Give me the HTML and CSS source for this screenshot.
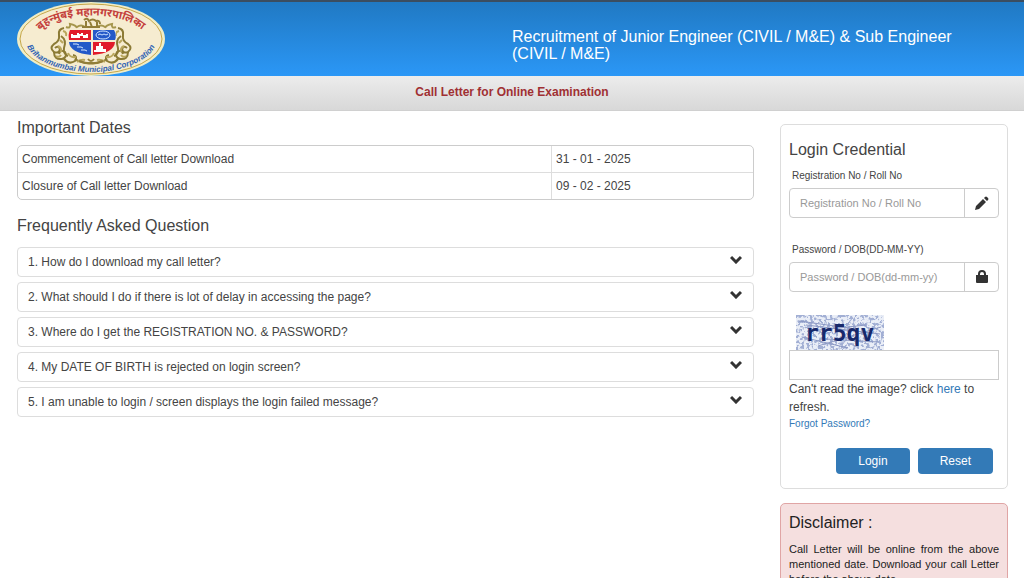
FILE: index.html
```html
<!DOCTYPE html>
<html lang="en">

<head>
    <meta charset="utf-8">
    <meta name="viewport" content="width=device-width, initial-scale=1">
    <title>Call Letter for Online Examination</title>
    <link rel="stylesheet" href="styles.css">
</head>

<body>

    <header class="header">
        <svg class="logo" viewBox="0 0 148 74" role="img" aria-label="Brihanmumbai Municipal Corporation">
            <defs>
                <path id="arc_top" d="M21 32 A54 23 0 0 1 127 32"/>
                <path id="arc_bottom" d="M9 38 A65 32 0 0 0 139 38"/>
                <g id="scroll" fill="none" stroke="#8b7a35" stroke-width="2">
                    <path d="M47 26 q-6 1 -5 7 q1 6 -5 9 q-5 4 0 8 q5 2 6 -3 q-2 -4 -5 -1"/>
                    <path d="M37 50 q0 8 8 7 q6 -2 3 -7 q-5 -3 -6 2 M47 57 q5 6 11 2 q3 -5 -2 -6"/>
                    <path d="M44 34 q6 4 3 12 q-1 6 4 8 M58 57 q8 5 16 4"/>
                    <path d="M49 25 q5 2 4 -3 q6 1 7 4 M60 25 q4 -3 8 0" stroke="#a5964c"/>
                    <path d="M46 29 q4 1 3 5 M43 38 l3 3 M41 44 q4 2 3 6 M51 51 q2 5 8 4 M60 60 q4 -3 8 -2 M39 54 q3 2 5 -1" stroke="#b9a65c"/>
                </g>
            </defs>
            <ellipse cx="74" cy="37" rx="74" ry="37" fill="#f0edc5"/>
            <ellipse cx="74" cy="37" rx="71" ry="35" fill="#f6ecd0" stroke="#c5a748" stroke-width="1"/>
            <text class="logo_hindi"><textPath href="#arc_top" startOffset="50%" text-anchor="middle">बृहन्मुंबई महानगरपालिका</textPath></text>
            <use href="#scroll"/>
            <use href="#scroll" transform="matrix(-1 0 0 1 148 0)"/>
            <g fill="none" stroke="#927e38" stroke-width="2">
                <path d="M67 18 q3 -3 5 1 q4 -3 7 0 q4 -1 4 3 M69 19 v6 M73 20 l2 5 M80 20 v5 M65 25 h18"/>
                <path d="M62 59 q12 5 24 0 M71 57 q3 4 6 0"/>
            </g>
            <path d="M51 27 H99 V43 Q97 51 75 54 Q53 51 51 43 Z" fill="#f6ecd0"/>
            <path d="M53 28 h21 v10 h-22 q-1 -6 1 -10" fill="#e11b2b"/>
            <path d="M76 28 h21 q3 5 1 10 h-22 Z" fill="#2459c8"/>
            <path d="M52 40 h22 v13 q-21 -2 -22 -13" fill="#2459c8"/>
            <path d="M76 40 h22 q-1 11 -22 13 Z" fill="#e11b2b"/>
            <path d="M54 36 v-4 h2 v1 h4 v-2 h2 v1 h2 v-1 h2 v2 h3 v-1 h2 v4 h-5 v-2 h-3 v2 Z" fill="#fff"/>
            <ellipse cx="86" cy="33" rx="7" ry="4" fill="none" stroke="#cce2ff"/>
            <path d="M81 33 l2 -1 2 1 2 -1 2 1 2 -1" fill="none" stroke="#cce2ff"/>
            <path d="M56 42 h4 l2 1 M60 45 h4 l2 1 M64 48 h4 l2 1" fill="none" stroke="#d6e8ff"/>
            <path d="M77 50 v-2 h2 v-4 h3 v-3 h2 v3 h2 v3 h3 v3 Z" fill="#fff"/>
            <text class="logo_english"><textPath href="#arc_bottom" startOffset="50%" text-anchor="middle">Brihanmumbai Municipal Corporation</textPath></text>
        </svg>
        <h1 class="header_title">Recruitment of Junior Engineer (CIVIL / M&amp;E) &amp; Sub Engineer (CIVIL / M&amp;E)</h1>
    </header>

    <div class="sub_header">Call Letter for Online Examination</div>

    <div class="content">
        <main>
            <h2 class="section_title">Important Dates</h2>
            <table class="dates">
                <tr>
                    <td class="date_name">Commencement of Call letter Download</td>
                    <td>31 - 01 - 2025</td>
                </tr>
                <tr>
                    <td class="date_name">Closure of Call letter Download</td>
                    <td>09 - 02 - 2025</td>
                </tr>
            </table>

            <h2 class="section_title">Frequently Asked Question</h2>
            <div class="faq">
                <button class="question" type="button">1. How do I download my call letter?
                    <svg class="chevron" viewBox="0 0 12 9"><path d="M1 2 L6 7 L11 2"/></svg></button>
                <button class="question" type="button">2. What should I do if there is lot of delay in accessing the page?
                    <svg class="chevron" viewBox="0 0 12 9"><path d="M1 2 L6 7 L11 2"/></svg></button>
                <button class="question" type="button">3. Where do I get the REGISTRATION NO. &amp; PASSWORD?
                    <svg class="chevron" viewBox="0 0 12 9"><path d="M1 2 L6 7 L11 2"/></svg></button>
                <button class="question" type="button">4. My DATE OF BIRTH is rejected on login screen?
                    <svg class="chevron" viewBox="0 0 12 9"><path d="M1 2 L6 7 L11 2"/></svg></button>
                <button class="question" type="button">5. I am unable to login / screen displays the login failed message?
                    <svg class="chevron" viewBox="0 0 12 9"><path d="M1 2 L6 7 L11 2"/></svg></button>
            </div>
        </main>

        <aside class="sidebar">
            <form class="login">
                <h2 class="login_title">Login Credential</h2>

                <label class="label_text" for="regno">Registration No / Roll No</label>
                <div class="input_group">
                    <input class="text_input" type="text" id="regno" name="regno" placeholder="Registration No / Roll No">
                    <span class="input_icon">
                        <svg viewBox="0 0 14 14"><path d="M0 14 L1 10 L8 3 L11 6 L4 13 Z M9 2 L10 1 Q11 0 12 1 L13 2 Q14 3 13 4 L12 5 Z"/></svg>
                    </span>
                </div>

                <label class="label_text" for="password">Password / DOB(DD-MM-YY)</label>
                <div class="input_group">
                    <input class="text_input" type="password" id="password" name="password" placeholder="Password / DOB(dd-mm-yy)">
                    <span class="input_icon">
                        <svg viewBox="0 0 14 14"><path fill-rule="evenodd" d="M1 5 H3 V4 Q3 0 7 0 Q11 0 11 4 V5 H13 V12 Q13 13 12 13 H2 Q1 13 1 12 Z M5 5 H9 V4 Q9 2 7 2 Q5 2 5 4 Z"/></svg>
                    </span>
                </div>

                <svg class="captcha" viewBox="0 0 88 35">
                    <defs>
                        <filter id="speckle" x="0" y="0" width="100%" height="100%">
                            <feTurbulence type="fractalNoise" baseFrequency="0.35" numOctaves="2" seed="5"/>
                            <feColorMatrix values="0 0 0 0 0.36  0 0 0 0 0.43  0 0 0 0 0.66  9 0 0 0 -4.3"/>
                        </filter>
                    </defs>
                    <rect width="88" height="35" fill="#eaeef7"/>
                    <rect width="88" height="35" filter="url(#speckle)"/>
                    <path class="captcha_lines" d="M3 6 L60 14 M10 10 L84 19 M22 31 L85 12 M6 22 L52 33 M30 24 L82 27 M14 16 L70 10"/>
                    <text class="captcha_text" x="9" y="26">rr5qv</text>
                </svg>
                <input class="captcha_input" type="text" name="captcha" aria-label="Captcha">
                <p class="refresh">Can't read the image? click <a href="#">here</a> to refresh.</p>
                <a class="forgot" href="#">Forgot Password?</a>

                <div class="buttons">
                    <button class="btn" type="submit">Login</button>
                    <button class="btn" type="reset">Reset</button>
                </div>
            </form>

            <section class="disclaimer">
                <h2 class="disclaimer_title">Disclaimer :</h2>
                <p class="disclaimer_text">Call Letter will be online from the above mentioned date. Download your call Letter before the above date.</p>
            </section>
        </aside>
    </div>

</body>

</html>
```
FILE: styles.css
```css
* {
    box-sizing: border-box;
}

body {
    margin: 0;
    background: #fff;
    color: #444;
    font-family: "Liberation Sans", Arial, sans-serif;
    font-size: 12px;
    line-height: 18px;
}

h1, h2, p {
    margin: 0;
    font-weight: normal;
}

a {
    color: #337ab7;
    text-decoration: none;
}

input, button {
    font: inherit;
    color: inherit;
}

/* header */
.header {
    display: grid;
    grid-template-columns: 1fr 1fr;
    align-items: end;
    border-top: 2px solid #3b4d60;
    background: linear-gradient(#2079c3, #2b97f6);
}

.logo {
    display: block;
    width: 148px;
    height: 74px;
    margin-left: 17px;
}

.logo_hindi {
    font-family: "Noto Sans Devanagari", "Noto Sans", sans-serif;
    font-size: 11px;
    font-weight: bold;
    fill: #c4403c;
}

.logo_english {
    font-size: 8px;
    font-weight: bold;
    font-style: italic;
    fill: #2f62b4;
}

.header_title {
    max-width: 450px;
    margin-bottom: 14px;
    color: #fff;
    font-size: 16px;
    line-height: 17px;
}

.sub_header {
    height: 35px;
    padding-top: 7px;
    border-bottom: 1px solid #d0d0d0;
    background: linear-gradient(#ececec, #d8d8d8);
    color: #a03033;
    font-weight: bold;
    text-align: center;
}

/* page columns */
.content {
    display: grid;
    grid-template-columns: minmax(0, 1fr) 228px;
    gap: 26px;
    padding: 0 16px 16px 17px;
}

.section_title {
    margin: 8px 0;
    font-size: 16px;
}

.dates {
    width: 100%;
    margin-bottom: 17px;
    border: 1px solid #ccc;
    border-radius: 5px;
    border-spacing: 0;
}

.dates td {
    height: 26px;
    padding: 0 4px;
}

.dates tr + tr td {
    height: 27px;
    border-top: 1px solid #ddd;
}

.dates .date_name {
    width: 534px;
    border-right: 1px solid #ddd;
}

.faq {
    display: grid;
    gap: 5px;
    margin-top: 12px;
}

.question {
    display: flex;
    justify-content: space-between;
    height: 30px;
    padding: 5px 11px 0 10px;
    border: 1px solid #ddd;
    border-radius: 4px;
    background: #fff;
    text-align: left;
}

.chevron {
    width: 12px;
    height: 9px;
    margin-top: 2px;
    fill: none;
    stroke: #333;
    stroke-width: 3;
}

/* login box */
.login {
    margin-top: 13px;
    padding: 16px 8px 14px;
    border: 1px solid #ddd;
    border-radius: 5px;
}

.login_title {
    margin-bottom: 8px;
    font-size: 16px;
}

.label_text {
    display: block;
    margin-bottom: 3px;
    padding-left: 3px;
    font-size: 10px;
}

.input_group {
    display: flex;
    height: 30px;
    margin-bottom: 23px;
    border: 1px solid #ccc;
    border-radius: 4px;
}

.text_input {
    flex: 1;
    min-width: 0;
    padding: 0 10px;
    border: 0;
    background: none;
    font-size: 11px;
}

.text_input::placeholder {
    color: #999;
}

.input_icon {
    display: flex;
    align-items: center;
    justify-content: center;
    width: 34px;
    border-left: 1px solid #ccc;
}

.input_icon svg {
    width: 14px;
    height: 14px;
    fill: #333;
}

.captcha {
    display: block;
    width: 88px;
    height: 35px;
    margin-left: 7px;
}

.captcha_lines {
    fill: none;
    stroke: #8b98c4;
}

.captcha_text {
    font-family: "DejaVu Sans Mono", monospace;
    font-size: 23px;
    font-weight: bold;
    fill: #17296b;
}

.captcha_input {
    display: block;
    width: 100%;
    height: 30px;
    border: 1px solid #ccc;
}

.forgot {
    display: block;
    font-size: 10px;
    line-height: 16px;
}

.buttons {
    display: flex;
    justify-content: flex-end;
    gap: 8px;
    margin-top: 16px;
    padding-right: 6px;
}

.btn {
    height: 26px;
    padding: 0 22px;
    border: 0;
    border-radius: 4px;
    background: #337ab7;
    color: #fff;
}

/* disclaimer */
.disclaimer {
    margin-top: 14px;
    padding: 10px 8px;
    border: 1px solid #e0a5a5;
    border-radius: 5px;
    background: #f5dfdf;
    color: #222;
}

.disclaimer_title {
    margin-bottom: 10px;
    font-size: 16px;
}

.disclaimer_text {
    font-size: 11px;
    line-height: 15px;
    text-align: justify;
}
```
